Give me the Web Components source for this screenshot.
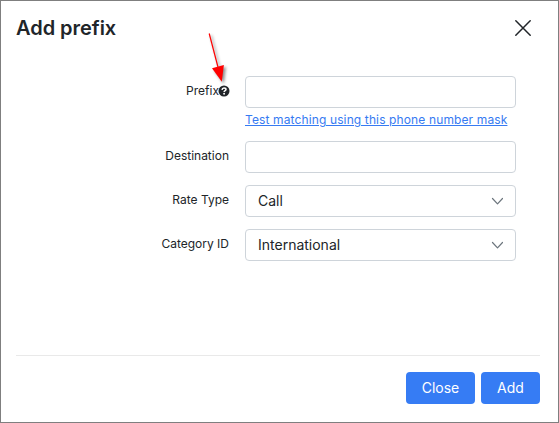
<!DOCTYPE html>
<html lang="en">
<head>
<meta charset="utf-8">
<title>Add prefix</title>
<style>
html,body{margin:0;height:100%}
body{font-family:Inter,"Liberation Sans",sans-serif;color:#212529;background:#fff}
</style>
</head>
<body>
<modal-dialog>
  <span slot="title">Add prefix</span>
  <form-row label="Prefix" help>
    <text-field></text-field>
    <hint-link slot="hint">Test matching using this phone number mask</hint-link>
  </form-row>
  <form-row label="Destination"><text-field></text-field></form-row>
  <form-row label="Rate Type"><select-field>Call</select-field></form-row>
  <form-row label="Category ID"><select-field>International</select-field></form-row>
  <action-button slot="footer" style="--w:69px">Close</action-button>
  <action-button slot="footer" style="--w:59px">Add</action-button>
</modal-dialog>
<script>
const define = (name, html, init) => customElements.define(name, class extends HTMLElement {
  constructor() {
    super();
    this.attachShadow({ mode: 'open' }).innerHTML = html;
  }
  connectedCallback() { if (init) init(this, this.shadowRoot); }
});

define('modal-dialog', `
<style>
:host{display:flex;flex-direction:column;box-sizing:border-box;width:559px;height:423px;border:1px solid #7f7f7f;background:#fff}
header{display:flex;justify-content:space-between;align-items:center;height:54px;padding:0 24px 0 15px}
h1{margin:0;font-size:20px;line-height:24px;font-weight:600;letter-spacing:-.04px}
svg{display:block}
main{flex:1;display:flex;flex-direction:column;gap:12px;padding-top:21px}
footer{display:flex;justify-content:flex-end;gap:6px;margin:0 18px 0 15px;padding:16px 0 18px;border-top:1px solid #e9e9e9}
</style>
<header><h1><slot name="title"></slot></h1>
<svg width="22" height="22" viewBox="0 0 22 22" fill="none" stroke="#212529" stroke-width="1.5" stroke-linecap="round"><path d="M3.8 3.8 18.2 18.2M18.2 3.8 3.8 18.2"/></svg></header>
<main><slot></slot></main>
<footer><slot name="footer"></slot></footer>`);

define('form-row', `
<style>
:host{display:grid;grid-template-columns:228px 271px;column-gap:16px}
.label{display:flex;justify-content:flex-end;align-items:center;height:30px;font-size:12px;line-height:18px;white-space:nowrap}
help-mark{display:none}
:host([help]) help-mark{display:block}
::slotted([slot=hint]){margin:3px 0 0}
</style>
<div class="label"><span></span><help-mark></help-mark></div>
<div><slot></slot><slot name="hint"></slot></div>`,
(el, root) => { root.querySelector('span').textContent = el.getAttribute('label'); });

define('help-mark', `
<style>
:host{position:relative;width:10px;height:10px}
svg{display:block}
.mark{overflow:visible}
.arrow{position:absolute;left:-16px;top:-54px;pointer-events:none;filter:drop-shadow(2px 2px 1.5px rgba(0,0,0,.45))}
</style>
<svg class="mark" width="10" height="10" viewBox="0 0 10 10"><circle cx="5" cy="5" r="5.5" fill="#212529"/><path d="M3 3.9C3.2 2.5 4 1.9 5 1.9c1.1 0 2 .6 2 1.65C7 4.7 5.1 4.7 5.1 6" fill="none" stroke="#fff" stroke-width="1.5"/><circle cx="5.1" cy="7.8" r=".95" fill="#fff"/></svg>
<svg class="arrow" width="28" height="54" viewBox="0 0 28 54"><path d="M6.2 1.5 16 39" stroke="#f00" stroke-width="1.2"/><path d="M9 36.3 20.9 33 18.8 49.8Z" fill="#f00"/></svg>`);

define('text-field', `
<style>
:host{display:block}
input{display:block;box-sizing:border-box;width:100%;height:32px;padding:0 12px;border:1px solid #ced4da;border-radius:4px;background:#fff;font:14px Inter,sans-serif;color:inherit;outline:0}
</style>
<input type="text">`);

define('hint-link', `
<style>
:host{display:block;font-size:12px;line-height:18px;letter-spacing:.125px;white-space:nowrap}
a{color:#367af2;text-decoration:underline}
</style>
<a href="#"><slot></slot></a>`);

define('select-field', `
<style>
:host{display:flex;justify-content:space-between;align-items:center;box-sizing:border-box;height:32px;padding:0 12px;border:1px solid #ced4da;border-radius:4px;font-size:14px;line-height:21px}
span{padding-bottom:2px}
</style>
<span><slot></slot></span>
<svg width="12" height="12" viewBox="0 0 12 12" fill="none" stroke="#6c757d" stroke-width="1.2" stroke-linecap="round" stroke-linejoin="round"><path d="M1.5 3.5 6.5 8.8 11.5 3.5"/></svg>`);

define('action-button', `
<style>
:host{display:block}
button{display:block;box-sizing:border-box;width:var(--w);height:32px;padding:0 0 2px;border:0;border-radius:4px;background:#367cf4;color:#fff;font:14px/21px Inter,sans-serif}
</style>
<button type="button"><slot></slot></button>`);
</script>
</body>
</html>
